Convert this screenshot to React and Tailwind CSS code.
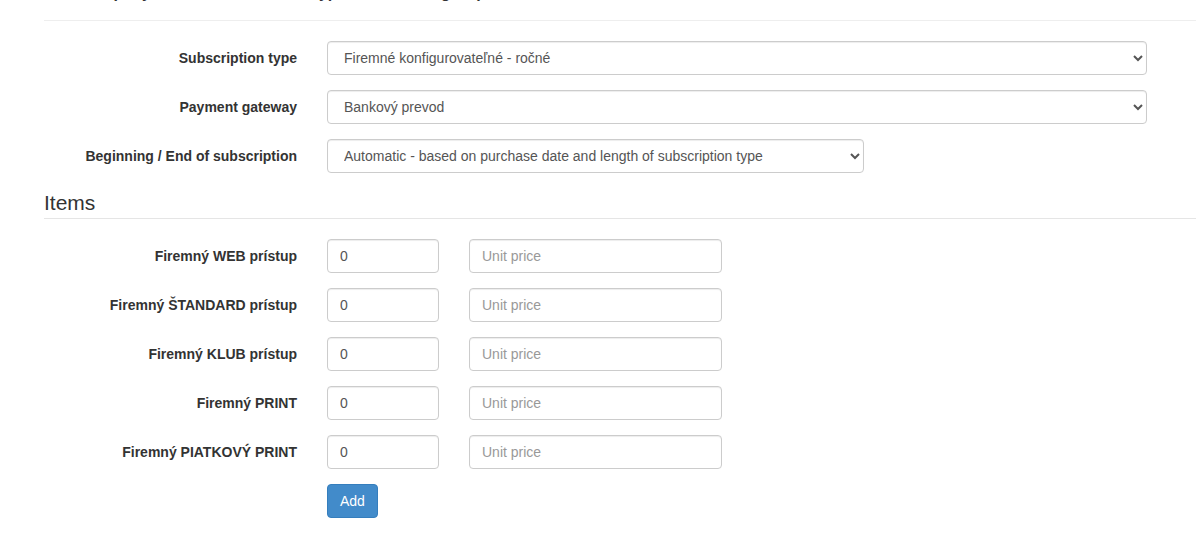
import { useState } from 'react'

const items = [
  'Firemný WEB prístup',
  'Firemný ŠTANDARD prístup',
  'Firemný KLUB prístup',
  'Firemný PRINT',
  'Firemný PIATKOVÝ PRINT',
]

const inputCls =
  'h-[34px] border border-[#ccc] rounded-[4px] bg-white px-3 text-[14px] text-[#555] placeholder:text-[#999] outline-none shadow-[inset_0_1px_1px_rgba(0,0,0,0.075)]'

function Row({ label, children }) {
  return (
    <div className="flex items-center mb-[15px]">
      <label className="w-[253px] shrink-0 text-right font-bold text-[14px] text-[#333]">{label}</label>
      <div className="ml-[30px] flex gap-[30px]">{children}</div>
    </div>
  )
}

export default function App() {
  const [qty, setQty] = useState(items.map(() => '0'))

  return (
    <div className="w-[1196px] h-[544px] overflow-hidden bg-white pl-[44px] text-[14px] leading-[20px] text-[#333]" style={{ fontFamily: '"Liberation Sans", Arial, sans-serif' }}>
      {/* previous section, cut off at the top */}
      <div className="h-[21px] border-b border-[#eee] overflow-hidden">
        <div className="-mt-[17px] text-[16px] font-bold text-[#333] pl-[2px] whitespace-nowrap">
          Edit company address and invoice type for the web group
        </div>
      </div>

      <div className="pt-[20px]">
        <Row label="Subscription type">
          <select className={inputCls + ' w-[820px]'} defaultValue="a">
            <option value="a">Firemné konfigurovateľné - ročné</option>
          </select>
        </Row>
        <Row label="Payment gateway">
          <select className={inputCls + ' w-[820px]'} defaultValue="b">
            <option value="b">Bankový prevod</option>
          </select>
        </Row>
        <Row label="Beginning / End of subscription">
          <select className={inputCls + ' w-[537px]'} defaultValue="auto">
            <option value="auto">Automatic - based on purchase date and length of subscription type</option>
          </select>
        </Row>
      </div>

      <div className="h-[31px] border-b border-[#e5e5e5] text-[21px] leading-[30px] text-[#333] mb-[20px]">Items</div>

      {items.map((name, i) => (
        <Row key={name} label={name}>
          <input
            className={inputCls + ' w-[112px]'}
            value={qty[i]}
            onChange={(e) => setQty(qty.map((q, j) => (j === i ? e.target.value : q)))}
          />
          <input className={inputCls + ' w-[253px]'} placeholder="Unit price" />
        </Row>
      ))}

      <div className="pl-[283px]">
        <button className="h-[34px] px-3 rounded-[4px] bg-[#428bca] border border-[#357ebd] text-white text-[14px]">Add</button>
      </div>
    </div>
  )
}
